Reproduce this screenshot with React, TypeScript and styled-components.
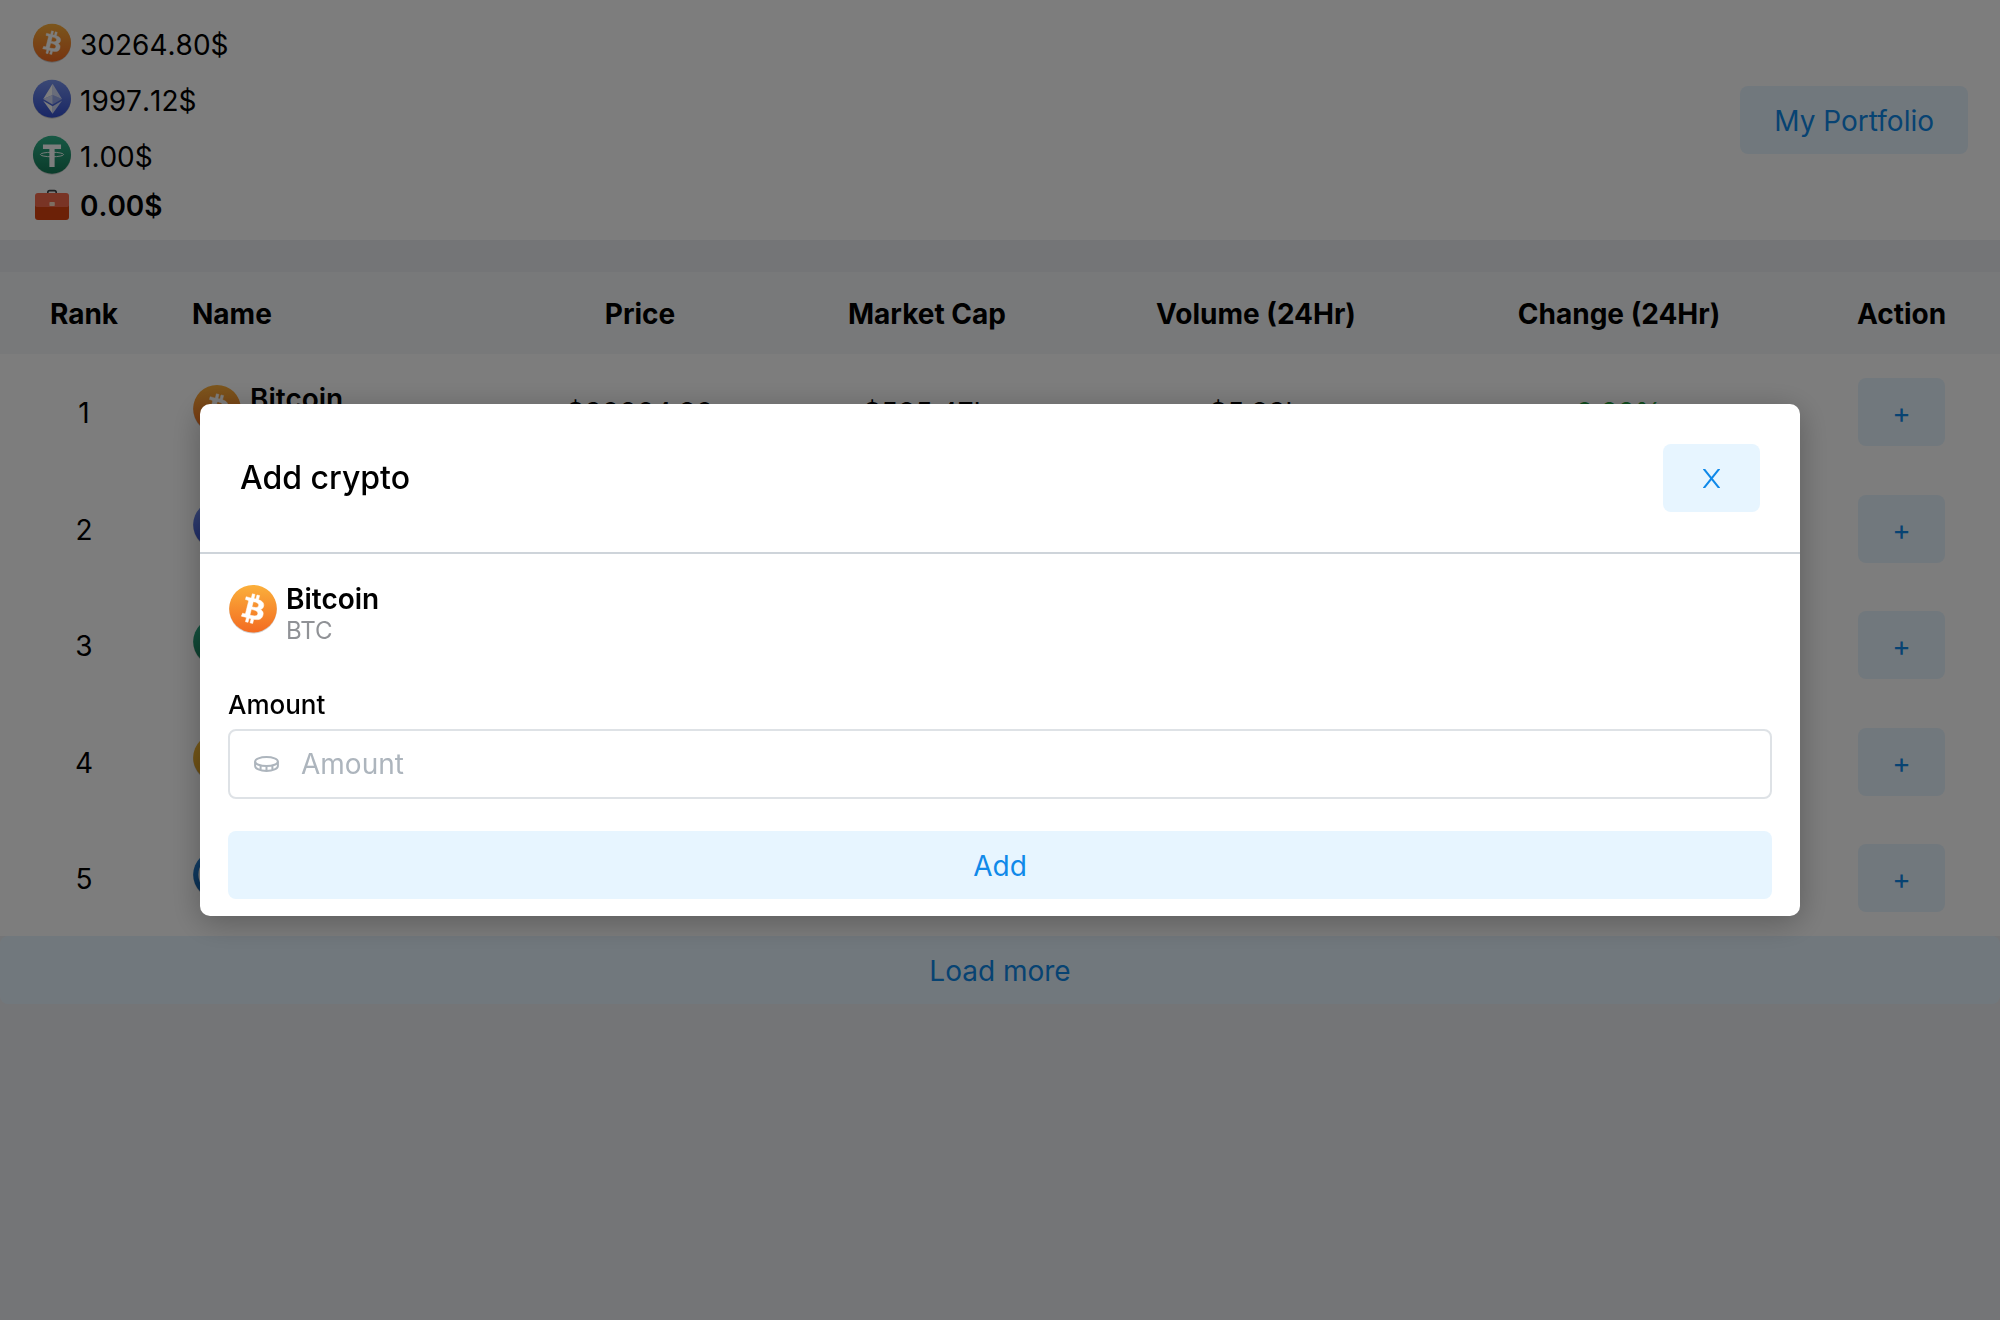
import React, { useState } from 'react';
import styled, { createGlobalStyle } from 'styled-components';

const GlobalStyle = createGlobalStyle`
  *, *::before, *::after { box-sizing: border-box; }
  body {
    margin: 0;
    background: #eceef2;
    color: #000;
    font-family: Inter, "Liberation Sans", sans-serif;
    font-size: 28px;
    line-height: 34px;
  }
`;

const Page = styled.div`
  min-height: 100vh;
`;

const Header = styled.header`
  display: flex;
  align-items: center;
  justify-content: space-between;
  padding: 16px 32px;
  margin-bottom: 32px;
  background: #fff;
`;

const RateList = styled.ul`
  margin: 0;
  padding: 0;
  list-style: none;
  line-height: 44px;
  font-kerning: none;
`;

const Rate = styled.li<{ $total?: boolean }>`
  display: flex;
  align-items: flex-start;
  gap: 8px;
  height: ${(p) => (p.$total ? 40 : 56)}px;
  padding-top: ${(p) => (p.$total ? 0 : 7)}px;
  font-weight: ${(p) => (p.$total ? 600 : 400)};
`;

const Button = styled.button<{ $wide?: boolean }>`
  display: inline-flex;
  align-items: center;
  justify-content: center;
  width: ${(p) => (p.$wide ? '100%' : 'auto')};
  height: 68px;
  padding: 2px 34px 0;
  border: 0;
  border-radius: 8px;
  background: #e7f5ff;
  color: #1089e9;
  font: inherit;
  vertical-align: top;
  cursor: pointer;
`;

const CloseButton = styled(Button)`
  padding: 0 40px;
`;

const Table = styled.table`
  width: 100%;
  table-layout: fixed;
  border-collapse: collapse;
  background: #fff;
`;

const Col = styled.col<{ $share?: string }>`
  width: ${(p) => p.$share ?? 'auto'};
`;

const HeadCell = styled.th<{ $left?: boolean }>`
  height: 82px;
  padding: 2px 24px 0;
  background: #f4f6f9;
  font-weight: 700;
  text-align: ${(p) => (p.$left ? 'left' : 'center')};
  white-space: nowrap;
`;

const Row = styled.tr`
  height: 116px;
  &:nth-child(even) { height: 117px; }
`;

const Cell = styled.td<{ $tone?: 'up' | 'down' }>`
  padding: 2px 24px 0;
  text-align: center;
  color: ${(p) => (p.$tone === 'up' ? '#1f9d3a' : p.$tone === 'down' ? '#e03131' : 'inherit')};
`;

const ActionCell = styled.td`
  padding: 0 24px;
  text-align: center;
`;

const Coin = styled.div`
  display: flex;
  align-items: flex-start;
  gap: 8px;
  text-align: left;

  & > svg { margin-top: 2px; }
`;

const CoinText = styled.div`
  display: flex;
  flex-direction: column;
`;

const CoinName = styled.span`
  font-weight: 600;
`;

const CoinSymbol = styled.span`
  color: #909296;
  font-size: 24px;
  line-height: 29px;
`;

const Overlay = styled.div`
  position: fixed;
  inset: 0;
  display: flex;
  align-items: center;
  justify-content: center;
  background: rgba(0, 0, 0, 0.51);
`;

const Modal = styled.section`
  width: 80%;
  border-radius: 10px;
  background: #fff;
  box-shadow: 0 6px 32px rgba(0, 0, 0, 0.28);
`;

const ModalHeader = styled.header`
  display: flex;
  align-items: center;
  justify-content: space-between;
  padding: 40px;
  border-bottom: 2px solid #ced4da;
`;

const ModalTitle = styled.h2`
  margin: 0;
  font-size: 32px;
  line-height: 40px;
  font-weight: 500;
`;

const ModalBody = styled.form`
  padding: 28px 28px 17px;
`;

const Label = styled.label`
  display: block;
  margin: 40px 0 4px;
  font-size: 26px;
  font-weight: 500;
  line-height: 40px;
`;

const Field = styled.div`
  display: flex;
  align-items: center;
  gap: 22px;
  height: 70px;
  margin-bottom: 32px;
  padding: 0 24px;
  border: 2px solid #dee2e6;
  border-radius: 8px;
  color: #adb5bd;
`;

const Input = styled.input`
  flex: 1;
  min-width: 0;
  padding: 0;
  border: 0;
  outline: 0;
  background: transparent;
  color: #000;
  font: inherit;
  &::placeholder { color: #adb5bd; opacity: 1; }
`;

type CoinId = 'btc' | 'eth' | 'usdt' | 'bnb' | 'usdc';

const gradients: Record<CoinId, [string, string]> = {
  btc: ['#fbb03b', '#f36b21'],
  eth: ['#7894ee', '#3450d0'],
  usdt: ['#30b48c', '#157a57'],
  bnb: ['#f7bd3a', '#d89a22'],
  usdc: ['#2a86d8', '#135ca5'],
};

function Glyph({ id }: { id: CoinId }) {
  if (id === 'btc') {
    return (
      <path
        fill="#fff"
        stroke="#fff"
        strokeWidth=".35"
        d="M23.189 14.02c.314-2.096-1.283-3.223-3.465-3.975l.708-2.84-1.728-.43-.69 2.765c-.454-.114-.92-.22-1.385-.326l.695-2.783L15.596 6l-.708 2.839c-.376-.086-.746-.17-1.104-.26l.002-.009-2.384-.595-.46 1.846s1.283.294 1.256.312c.7.175.826.638.805 1.006l-.806 3.235c.048.012.11.03.18.057l-.183-.045-1.13 4.532c-.086.212-.303.531-.793.41.018.025-1.256-.313-1.256-.313l-.858 1.978 2.25.561c.418.105.828.215 1.231.318l-.715 2.872 1.727.43.708-2.84c.472.127.93.245 1.378.357l-.706 2.828 1.728.43.715-2.866c2.948.558 5.164.333 6.097-2.333.752-2.146-.037-3.385-1.588-4.192 1.13-.26 1.98-1.003 2.207-2.538zm-3.95 5.538c-.533 2.147-4.148.986-5.32.695l.95-3.805c1.172.293 4.929.872 4.37 3.11zm.535-5.569c-.487 1.953-3.495.96-4.47.717l.86-3.45c.975.243 4.118.696 3.61 2.733z"
      />
    );
  }
  if (id === 'eth') {
    return (
      <g fill="#fff">
        <path d="M16.5 3.4v9.5l7.9 3.3z" opacity=".75" />
        <path d="M16.5 3.4 8.6 16.2l7.9-3.3z" />
        <path d="m16.5 20.8 7.9-4.6-7.9-3.3z" opacity=".4" />
        <path d="m8.6 16.2 7.9 4.6v-7.9z" opacity=".75" />
        <path d="M16.5 22.3v6.3l7.9-11z" opacity=".75" />
        <path d="M16.5 28.6v-6.3l-7.9-4.7z" />
      </g>
    );
  }
  if (id === 'usdt') {
    return (
      <g>
        <path fill="#fff" d="M8.4 7.4h15.2v3.8H18.2v15H13.8v-15H8.4z" />
        <ellipse cx="16" cy="15.8" rx="9.7" ry="1.9" fill="none" stroke="#fff" strokeWidth=".8" />
      </g>
    );
  }
  if (id === 'bnb') {
    return (
      <path
        fill="#fff"
        d="m12.1 14.4 3.9-3.9 3.9 3.9 2.3-2.3L16 6l-6.2 6.1zM6 16l2.3-2.3 2.2 2.3-2.2 2.3zm6.1 1.6 3.9 3.9 3.9-3.9 2.3 2.3L16 26l-6.2-6.1zM21.5 16l2.2-2.3L26 16l-2.3 2.3zm-3.2 0L16 13.7 13.7 16l2.3 2.3z"
      />
    );
  }
  return <circle cx="16" cy="16" r="11.5" fill="none" stroke="#fff" strokeWidth="2" />;
}

function CoinIcon({ id, size, scope }: { id: CoinId; size: number; scope: string }) {
  const fill = `${scope}-${id}`;
  return (
    <svg width={size} height={size} viewBox="-0.8 -0.6 33.6 33.6" aria-hidden="true">
      <defs>
        <linearGradient id={fill} x1="0" y1="0" x2="0" y2="1">
          <stop offset="0" stopColor={gradients[id][0]} />
          <stop offset="1" stopColor={gradients[id][1]} />
        </linearGradient>
      </defs>
      <circle cx="16" cy="16.7" r="16" fill="#000" opacity=".18" />
      <circle cx="16" cy="16" r="16" fill={`url(#${fill})`} />
      <Glyph id={id} />
    </svg>
  );
}

function BriefcaseIcon() {
  return (
    <svg width="40" height="40" viewBox="0 0 40 40" aria-hidden="true">
      <path d="M15.8 9.5V8.4q0-1.8 1.8-1.8h4.8q1.8 0 1.8 1.8v1.1" fill="none" stroke="#3c4246" strokeWidth="1.6" />
      <path d="M3 21h34v12q0 3-3 3H6q-3 0-3-3z" fill="#dc4410" />
      <path d="M3 12q0-3 3-3h28q3 0 3 3v9q0 2-3 2H6q-3 0-3-2z" fill="#f76a4c" />
      <rect x="17.4" y="18" width="5.4" height="4" rx=".8" fill="#ffe0c8" />
    </svg>
  );
}

function CloseIcon() {
  return (
    <svg width="17" height="19" viewBox="0 0 17 19" stroke="currentColor" strokeWidth="2.1" aria-hidden="true">
      <path d="M-.4-1.6 17.4 20.6M17.4-1.6-.4 20.6" />
    </svg>
  );
}

function CoinStackIcon() {
  return (
    <svg width="25" height="16" viewBox="0 0 25 16" fill="none" stroke="currentColor" strokeWidth="2" aria-hidden="true">
      <ellipse cx="12.5" cy="5.6" rx="11.4" ry="4.5" />
      <path d="M1.1 5.6V10c0 2.6 4.9 4.9 11.4 4.9S23.9 12.600 23.9 10V5.600M6.600 9.400v5M12.500 10v5M18.400 9.400v5" />
    </svg>
  );
}

interface Asset {
  id: CoinId;
  name: string;
  symbol: string;
  price: string;
  cap: string;
  volume: string;
  change: string;
  up: boolean;
}

const assets: Asset[] = [
  { id: 'btc', name: 'Bitcoin', symbol: 'BTC', price: '$30264.80', cap: '$585.47b', volume: '$5.83b', change: '0.22%', up: true },
  { id: 'eth', name: 'Ethereum', symbol: 'ETH', price: '$1997.12', cap: '$240.53b', volume: '$3.21b', change: '0.41%', up: true },
  { id: 'usdt', name: 'Tether', symbol: 'USDT', price: '$1.00', cap: '$83.65b', volume: '$9.07b', change: '0.02%', up: true },
  { id: 'bnb', name: 'BNB', symbol: 'BNB', price: '$256.31', cap: '$42.74b', volume: '$0.28b', change: '-0.63%', up: false },
  { id: 'usdc', name: 'USD Coin', symbol: 'USDC', price: '$1.00', cap: '$27.15b', volume: '$0.49b', change: '0.01%', up: true },
];

const rates: { id: CoinId; value: string }[] = [
  { id: 'btc', value: '30264.80$' },
  { id: 'eth', value: '1997.12$' },
  { id: 'usdt', value: '1.00$' },
];

const columns = [
  { title: 'Rank', share: '8.4%' },
  { title: 'Name', share: '16.75%', left: true },
  { title: 'Price', share: '13.7%' },
  { title: 'Market Cap', share: '15%' },
  { title: 'Volume (24Hr)', share: '17.9%' },
  { title: 'Change (24Hr)', share: '18.4%' },
  { title: 'Action' },
];

function CoinInfo({ asset, scope }: { asset: Asset; scope: string }) {
  return (
    <Coin>
      <CoinIcon id={asset.id} size={50} scope={scope} />
      <CoinText>
        <CoinName>{asset.name}</CoinName>
        <CoinSymbol>{asset.symbol}</CoinSymbol>
      </CoinText>
    </Coin>
  );
}

export default function App() {
  const [selected, setSelected] = useState<Asset | null>(assets[0]);
  const [amount, setAmount] = useState('');
  const close = () => setSelected(null);

  return (
    <>
      <GlobalStyle />
      <Page>
        <Header>
          <RateList>
            {rates.map((rate) => (
              <Rate key={rate.id}>
                <CoinIcon id={rate.id} size={40} scope="rate" />
                {rate.value}
              </Rate>
            ))}
            <Rate $total>
              <BriefcaseIcon />
              0.00$
            </Rate>
          </RateList>
          <Button type="button">My Portfolio</Button>
        </Header>
        <Table>
          <colgroup>
            {columns.map((column) => (
              <Col key={column.title} $share={column.share} />
            ))}
          </colgroup>
          <thead>
            <tr>
              {columns.map((column) => (
                <HeadCell key={column.title} scope="col" $left={column.left}>
                  {column.title}
                </HeadCell>
              ))}
            </tr>
          </thead>
          <tbody>
            {assets.map((asset, index) => (
              <Row key={asset.id}>
                <Cell>{index + 1}</Cell>
                <Cell>
                  <CoinInfo asset={asset} scope="row" />
                </Cell>
                <Cell>{asset.price}</Cell>
                <Cell>{asset.cap}</Cell>
                <Cell>{asset.volume}</Cell>
                <Cell $tone={asset.up ? 'up' : 'down'}>{asset.change}</Cell>
                <ActionCell>
                  <Button type="button" aria-label={`Add ${asset.name}`} onClick={() => setSelected(asset)}>
                    +
                  </Button>
                </ActionCell>
              </Row>
            ))}
          </tbody>
        </Table>
        <Button type="button" $wide>
          Load more
        </Button>
      </Page>
      {selected && (
        <Overlay>
          <Modal role="dialog" aria-modal="true" aria-labelledby="modal-title">
            <ModalHeader>
              <ModalTitle id="modal-title">Add crypto</ModalTitle>
              <CloseButton type="button" aria-label="Close" onClick={close}>
                <CloseIcon />
              </CloseButton>
            </ModalHeader>
            <ModalBody
              onSubmit={(event) => {
                event.preventDefault();
                close();
              }}
            >
              <CoinInfo asset={selected} scope="modal" />
              <Label htmlFor="amount">Amount</Label>
              <Field>
                <CoinStackIcon />
                <Input
                  id="amount"
                  inputMode="decimal"
                  placeholder="Amount"
                  value={amount}
                  onChange={(event) => setAmount(event.target.value)}
                />
              </Field>
              <Button type="submit" $wide>
                Add
              </Button>
            </ModalBody>
          </Modal>
        </Overlay>
      )}
    </>
  );
}
